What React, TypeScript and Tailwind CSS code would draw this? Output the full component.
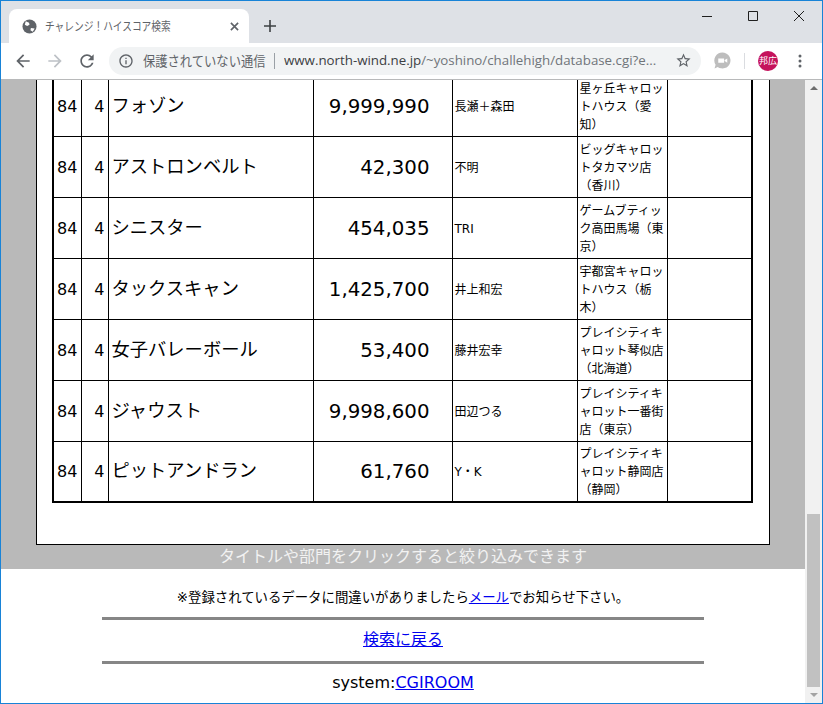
const jp = "font-['DejaVu_Sans','Noto_Sans_CJK_JP',sans-serif]";

const rows = [
  { name: "フォゾン", score: "9,999,990", player: "長瀬＋森田", place: "星ヶ丘キャロットハウス（愛知）" },
  { name: "アストロンベルト", score: "42,300", player: "不明", place: "ビッグキャロットタカマツ店（香川）" },
  { name: "シニスター", score: "454,035", player: "TRI", place: "ゲームブティック高田馬場（東京）" },
  { name: "タックスキャン", score: "1,425,700", player: "井上和宏", place: "宇都宮キャロットハウス（栃木）" },
  { name: "女子バレーボール", score: "53,400", player: "藤井宏幸", place: "プレイシティキャロット琴似店（北海道）" },
  { name: "ジャウスト", score: "9,998,600", player: "田辺つる", place: "プレイシティキャロット一番街店（東京）" },
  { name: "ピットアンドラン", score: "61,760", player: "Y・K", place: "プレイシティキャロット静岡店（静岡）" },
];

function Icon({ d, className }: { d: string; className: string }) {
  return (
    <svg viewBox="0 0 24 24" className={className} fill="currentColor">
      <path d={d} />
    </svg>
  );
}

function TabBar() {
  return (
    <div className="flex h-[42px] shrink-0 bg-[#dee1e6] pl-[8px]">
      <div className="mt-[8px] flex h-[34px] w-[240px] items-center rounded-t-[8px] bg-white pl-[13px] pr-[10px]">
        <svg viewBox="0 0 16 16" className="h-[15px] w-[15px] shrink-0">
          <circle cx="8" cy="8" r="7.500" fill="#5f6368" />
          <path d="M4 2.500 7.500 4 8 6 5.500 7.500 3 6ZM9.500 9.500l4 .5-2 3.500-2.500-1.500Z" fill="#fff" />
        </svg>
        <span className="ml-[8px] flex-1 origin-left scale-x-[0.81] whitespace-nowrap font-['Noto_Sans_CJK_JP',sans-serif] text-[12px] text-[#5f6368]">
          チャレンジ！ハイスコア検索
        </span>
        <svg viewBox="0 0 10 10" className="h-[9px] w-[9px] text-[#5f6368]" stroke="currentColor" strokeWidth="1.800">
          <path d="M1 1l8 8M9 1l-8 8" />
        </svg>
      </div>
      <svg viewBox="0 0 12 12" className="ml-[15px] mt-[19px] h-[12px] w-[12px] text-[#3c4043]" stroke="currentColor" strokeWidth="1.600">
        <path d="M6 0v12M0 6h12" />
      </svg>
      <div className="ml-auto flex h-[30px] items-center">
        <svg viewBox="0 0 102 10" className="mr-[18px] h-[10px] w-[102px] text-[#1f1f1f]" fill="none" stroke="currentColor" strokeWidth="1">
          <path d="M0 5.500h10M46.500 .5h9v9h-9zM92 0l10 10M102 0 92 10" />
        </svg>
      </div>
    </div>
  );
}

function Toolbar() {
  return (
    <div className="flex h-[37px] shrink-0 items-center border-b border-[#b8b9ba] bg-white pb-[1px]">
      <Icon className="ml-[12px] h-[20px] w-[20px] text-[#5f6368]" d="M20 11H7.830l5.590-5.590L12 4l-8 8 8 8 1.410-1.410L7.830 13H20v-2z" />
      <Icon className="ml-[12px] h-[20px] w-[20px] text-[#bdc1c6]" d="M12 4l-1.410 1.410L16.170 11H4v2h12.170l-5.580 5.590L12 20l8-8z" />
      <Icon className="ml-[12px] h-[20px] w-[20px] text-[#5f6368]" d="M17.650 6.350C16.200 4.900 14.210 4 12 4c-4.420 0-7.990 3.580-7.990 8s3.570 8 7.990 8c3.730 0 6.840-2.550 7.730-6h-2.080c-.820 2.330-3.040 4-5.650 4-3.310 0-6-2.690-6-6s2.690-6 6-6c1.660 0 3.140.690 4.220 1.780L13 11h7V4l-2.350 2.350z" />
      <div className="ml-[12px] flex h-[28px] w-[592px] items-center rounded-full bg-[#f1f3f4] pl-[9px] pr-[9px]">
        <Icon className="h-[16px] w-[16px] shrink-0 text-[#5f6368]" d="M11 7h2v2h-2zm0 4h2v6h-2zm1-9C6.480 2 2 6.480 2 12s4.480 10 10 10 10-4.480 10-10S17.520 2 12 2zm0 18c-4.410 0-8-3.590-8-8s3.590-8 8-8 8 3.590 8 8-3.590 8-8 8z" />
        <span className="ml-[9px] w-[122px] shrink-0 origin-left scale-x-[0.91] whitespace-nowrap font-['Noto_Sans_CJK_JP',sans-serif] text-[13.500px] text-[#5f6368]">保護されていない通信</span>
        <span className="mx-[9px] h-[16px] w-px bg-[#9aa0a6]" />
        <span className="flex-1 truncate font-['Open_Sans',sans-serif] text-[13.300px]">
          <span className="text-[#3c4043]">www.north-wind.ne.jp</span>
          <span className="text-[#70757a]">/~yoshino/challehigh/database.cgi?e...</span>
        </span>
        <Icon className="h-[17px] w-[17px] shrink-0 text-[#5f6368]" d="M22 9.240l-7.190-.620L12 2 9.190 8.630 2 9.240l5.460 4.730L5.820 21 12 17.270 18.180 21l-1.630-7.030L22 9.240zM12 15.400l-3.760 2.270 1-4.280-3.320-2.880 4.380-.380L12 6.100l1.710 4.040 4.380.380-3.320 2.880 1 4.280L12 15.400z" />
      </div>
      <svg viewBox="0 0 16 16" className="ml-[13px] h-[17px] w-[17px] shrink-0">
        <path d="M8 .500a7.500 7.500 0 1 1-4.500 13.500L.500 15.500l1-3.500A7.500 7.500 0 0 1 8 .500Z" fill="#bdbdbd" />
        <path d="M4 6h5.500v4H4zM10 7.500l2.500-1.500v4L10 8.500Z" fill="#fff" />
      </svg>
      <span className="ml-[13px] h-[16px] w-px bg-[#dadce0]" />
      <span className="ml-[13px] flex h-[20px] w-[20px] items-center justify-center rounded-full bg-[#c5135c] font-['Noto_Sans_CJK_JP',sans-serif] text-[9px] leading-none text-white">
        邦広
      </span>
      <svg viewBox="0 0 4 14" className="ml-[20px] h-[14px] w-[4px] text-[#5f6368]" fill="currentColor">
        <circle cx="2" cy="2" r="1.500" />
        <circle cx="2" cy="7" r="1.500" />
        <circle cx="2" cy="12" r="1.500" />
      </svg>
    </div>
  );
}

function ScoreTable() {
  return (
    <table className={`w-[699px] table-fixed border-collapse border-2 border-black text-black ${jp}`}>
      <colgroup>
        <col className="w-[28px]" />
        <col className="w-[27px]" />
        <col className="w-[205px]" />
        <col className="w-[139px]" />
        <col className="w-[125px]" />
        <col className="w-[90px]" />
        <col className="w-[85px]" />
      </colgroup>
      <tbody>
        {rows.map((r) => (
          <tr key={r.name} className="h-[61px]">
            <td className="border border-black px-[3px] pt-[2px] text-center text-[16px]">84</td>
            <td className="border border-black px-[3px] pt-[2px] text-right text-[16px]">4</td>
            <td className="border border-black px-[3px] text-[18.300px] leading-[28px]">{r.name}</td>
            <td className="border border-black pr-[22px] pt-[2px] text-right text-[19.800px]">{r.score}</td>
            <td className="border border-black pl-[2px] pr-[3px] pt-[2px] text-[12px]">{r.player}</td>
            <td className="border border-black px-[2px] pt-[2px] text-[12px] leading-[18px]">{r.place}</td>
            <td className="border border-black" />
          </tr>
        ))}
      </tbody>
    </table>
  );
}

function Scrollbar() {
  return (
    <div className="flex w-[17px] shrink-0 flex-col items-center bg-[#f1f1f1]">
      <div className="mt-[6px] h-0 w-0 border-x-[4px] border-b-[4px] border-x-transparent border-b-[#6e6e6e]" />
      <div className="mt-auto h-[173px] w-[13px] bg-[#c1c1c1]" />
      <div className="mb-[6px] mt-[6px] h-0 w-0 border-x-[4px] border-t-[4px] border-x-transparent border-t-[#a3a3a3]" />
    </div>
  );
}

export default function App() {
  return (
    <div className={`flex h-[704px] w-[823px] flex-col overflow-hidden border border-[#1883d7] bg-white ${jp}`}>
      <TabBar />
      <Toolbar />
      <div className="flex min-h-0 flex-1">
        <main className="flex min-w-0 flex-1 flex-col">
          <section className="flex min-h-0 flex-1 flex-col items-center justify-end overflow-hidden bg-[#b9b9b9]">
            <div className="flex w-[734px] shrink-0 justify-start border border-black bg-white pb-[41px] pl-[15px]">
              <ScoreTable />
            </div>
            <p className="h-[24px] shrink-0 text-center text-[16px] leading-[24px] text-[#f2f2f2]">
              タイトルや部門をクリックすると絞り込みできます
            </p>
          </section>
          <footer className="flex h-[134px] shrink-0 flex-col items-center text-black">
            <p className="mt-[19px] text-[13.400px] leading-[20px]">
              ※登録されているデータに間違いがありましたら
              <a href="#" className="text-[#0000ee] underline">メール</a>
              でお知らせ下さい。
            </p>
            <hr className="mt-[9px] h-[3px] w-[602px] border-0 bg-[#868686]" />
            <p className="mt-[8px] h-[24px] text-[16px] leading-[24px]">
              <a href="#" className="text-[#0000ee] underline">検索に戻る</a>
            </p>
            <hr className="mt-[9px] h-[3px] w-[602px] border-0 bg-[#868686]" />
            <p className="mt-[7px] text-[16px] leading-[24px]">
              system:<a href="#" className="text-[#0000ee] underline">CGIROOM</a>
            </p>
          </footer>
        </main>
        <Scrollbar />
      </div>
    </div>
  );
}
